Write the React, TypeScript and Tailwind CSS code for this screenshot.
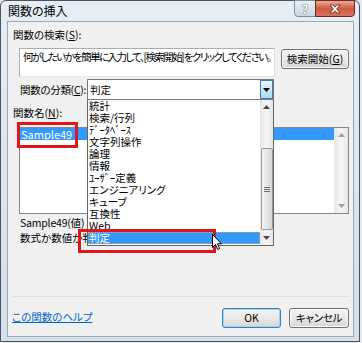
import React from 'react';

const categories = [
  '統計',
  '検索/行列',
  'ﾃﾞｰﾀﾍﾞｰｽ',
  '文字列操作',
  '論理',
  '情報',
  'ﾕｰｻﾞｰ定義',
  'エンジニアリング',
  'キューブ',
  '互換性',
  'Web',
  '判定',
];

const Tri: React.FC<{ down?: boolean; color?: string }> = ({ down, color = '#4a4a4a' }) => (
  <svg width="7" height="4" viewBox="0 0 7 4">
    <path d={down ? 'M0 0h7L3.5 4z' : 'M0 4h7L3.5 0z'} fill={color} />
  </svg>
);

const WinButton: React.FC<{ children: React.ReactNode; className?: string; primary?: boolean }> = ({
  children,
  className = '',
  primary,
}) => (
  <div
    className={
      'flex items-center justify-center whitespace-nowrap rounded-[3px] border bg-linear-to-b from-[#f4f4f4] via-[#e9e9e9] to-[#d5d5d5] text-[10.5px] leading-[14px] text-black ' +
      (primary ? 'border-[#3c7fb1] shadow-[inset_0_0_0_1px_#9fd3f0] ' : 'border-[#707070] shadow-[inset_0_0_0_1px_#fcfcfc] ') +
      className
    }
  >
    {children}
  </div>
);

const App: React.FC = () => {
  return (
    <div className="w-[362px] h-[343px] bg-[#e4e8ec] font-['Noto_Sans_CJK_JP',sans-serif] [font-feature-settings:'palt'] text-black overflow-hidden">
      <div className="relative w-[360px] h-[342px] rounded-t-[6px] border border-[#4a5461] bg-linear-to-b from-[#e6edf5] to-[#d3dfeb] flex flex-col">
        {/* title bar */}
        <div className="relative h-[20px] flex items-center pl-[7px] text-[12px] leading-[14px] text-black">
          関数の挿入
          <div className="absolute left-[293px] top-[-1px] w-[22px] h-[17px] rounded-bl-[4px] border border-[#7d8ea3] bg-linear-to-b from-[#e9eff6] to-[#c9d6e4] flex items-center justify-center">
            <span className="text-[12px] font-bold leading-none text-white [text-shadow:0_0_1px_#4d5a6a,0_0_1px_#4d5a6a]">?</span>
          </div>
          <div className="absolute left-[314px] top-[-1px] w-[40px] h-[17px] rounded-br-[4px] border border-[#6b2a1f] bg-linear-to-b from-[#e9a99b] via-[#cf5a41] to-[#d2755c] flex items-center justify-center">
            <svg width="12" height="10" viewBox="0 0 12 10">
              <path d="M1 1h3l2 2.2L8 1h3L7.6 5 11 9H8L6 6.8 4 9H1l3.4-4z" fill="#fff" stroke="#5a2a22" strokeWidth="0.8" />
            </svg>
          </div>
        </div>

        {/* client area */}
        <div className="ml-[6px] w-[347px] h-[316px] border border-[#9aa9b9] bg-[#f0f0f0]">
          <div className="relative flow-root w-[345px] h-[314px] pt-[6px] text-[10.5px] leading-[14px] whitespace-nowrap">
            <div className="ml-[5px] h-[14px]">
              関数の検索(<span className="underline">S</span>):
            </div>

            <div className="flex mt-[6px]">
              <div className="ml-[11px] w-[256px] h-[29px] border border-[#abadb3] border-b-[#e3e9ef] border-r-[#dbdfe6] bg-white px-[3px] pt-[1px] overflow-hidden tracking-[-1.6px]">
                何がしたいかを簡単に入力して、[検索開始] をクリックしてください。
              </div>
              <WinButton className="ml-[6px] mt-[1px] w-[68px] h-[20px]">
                検索開始(<span className="underline">G</span>)
              </WinButton>
            </div>

            <div className="flex items-center mt-[2px]">
              <div className="ml-[12px] w-[67px] tracking-[-0.3px]">
                関数の分類(<span className="underline">C</span>):
              </div>
              <div className="w-[187px] h-[21px] border border-[#7a7a7a] bg-white flex items-center">
                <span className="flex-1 pl-[2px]">判定</span>
                <div className="w-[13px] h-[19px] border border-[#3c7fb1] bg-linear-to-b from-[#eaf6fd] to-[#a7d9f5] flex items-center justify-center">
                  <Tri down color="#000" />
                </div>
              </div>
            </div>

            <div className="ml-[5px] mt-[6px] h-[14px]">
              関数名(<span className="underline">N</span>):
            </div>

            <div className="ml-[11px] mt-[7px] w-[330px] h-[87px] border border-[#828790] bg-white flex">
              <div className="flex-1">
                <div className="h-[12px] leading-[12px] bg-[#3399ff] text-white pl-[1px] text-[11px]">Sample49</div>
              </div>
              <div className="w-[14px] bg-linear-to-r from-[#e6e6e6] via-[#f6f6f6] to-[#e6e6e6] flex flex-col items-center justify-between py-[5px]">
                <Tri color="#a0a0a0" />
                <Tri down color="#a0a0a0" />
              </div>
            </div>

            <div className="ml-[12px] mt-[2px] h-[14px] tracking-[-0.2px]">Sample49(値)</div>
            <div className="ml-[12px] mt-[1px] h-[14px]">数式か数値か判定します。</div>

            <div className="ml-[4px] mt-[51px] w-[338px] h-[1px] bg-[#d9e0e7]" />

            <div className="flex items-center mt-[11px] h-[20px]">
              <span className="ml-[4px] mb-[3px] text-[#0066cc] underline">この関数のヘルプ</span>
              <WinButton primary className="ml-auto w-[59px] h-[20px]">
                OK
              </WinButton>
              <WinButton className="ml-[8px] mr-[4px] w-[60px] h-[20px] tracking-[-0.3px]">キャンセル</WinButton>
            </div>

            {/* dropdown list of the category combo */}
            <div className="absolute left-[79px] top-[78px] w-[187px] h-[146px] border border-t-0 border-[#646464] bg-white flex">
              <div className="flex-1 flex flex-col">
                {categories.map((c, i) =>
                  i === categories.length - 1 ? (
                    <div
                      key={c}
                      className="h-[12px] leading-[10px] bg-[#3399ff] text-white border border-dotted border-[#d9a55b]"
                    >
                      {c}
                    </div>
                  ) : (
                    <div key={c} className="h-[12px] leading-[12px] pl-[1px]">
                      {c}
                    </div>
                  ),
                )}
              </div>
              <div className="w-[13px] bg-linear-to-r from-[#e6e6e6] via-[#f6f6f6] to-[#e6e6e6] flex flex-col items-center">
                <div className="h-[14px] flex items-center">
                  <Tri />
                </div>
                <div className="mt-[34px] w-[12px] h-[82px] rounded-[2px] border border-[#979797] bg-linear-to-r from-[#f5f5f5] to-[#d6d6d6] flex flex-col items-center justify-center gap-[1px]">
                  <div className="w-[6px] h-[1px] bg-[#6d6d6d]" />
                  <div className="w-[6px] h-[1px] bg-[#6d6d6d]" />
                  <div className="w-[6px] h-[1px] bg-[#6d6d6d]" />
                </div>
                <div className="flex-1 flex items-center">
                  <Tri down />
                </div>
              </div>
            </div>

            {/* red highlight frames */}
            <div className="absolute left-[9px] top-[100px] w-[61px] h-[26px] border-[3px] border-[#e0161d]" />
            <div className="absolute left-[70px] top-[207px] w-[138px] h-[24px] border-[3px] border-[#e0161d]" />

            {/* mouse cursor */}
            <svg className="absolute left-[204px] top-[212px]" width="10" height="16" viewBox="0 0 10 16">
              <path d="M0.5 0.5v13l3-3 2.2 5 2-0.9-2.2-4.8h4z" fill="#fff" stroke="#000" strokeWidth="1" />
            </svg>
          </div>
        </div>
      </div>
    </div>
  );
};

export default App;
